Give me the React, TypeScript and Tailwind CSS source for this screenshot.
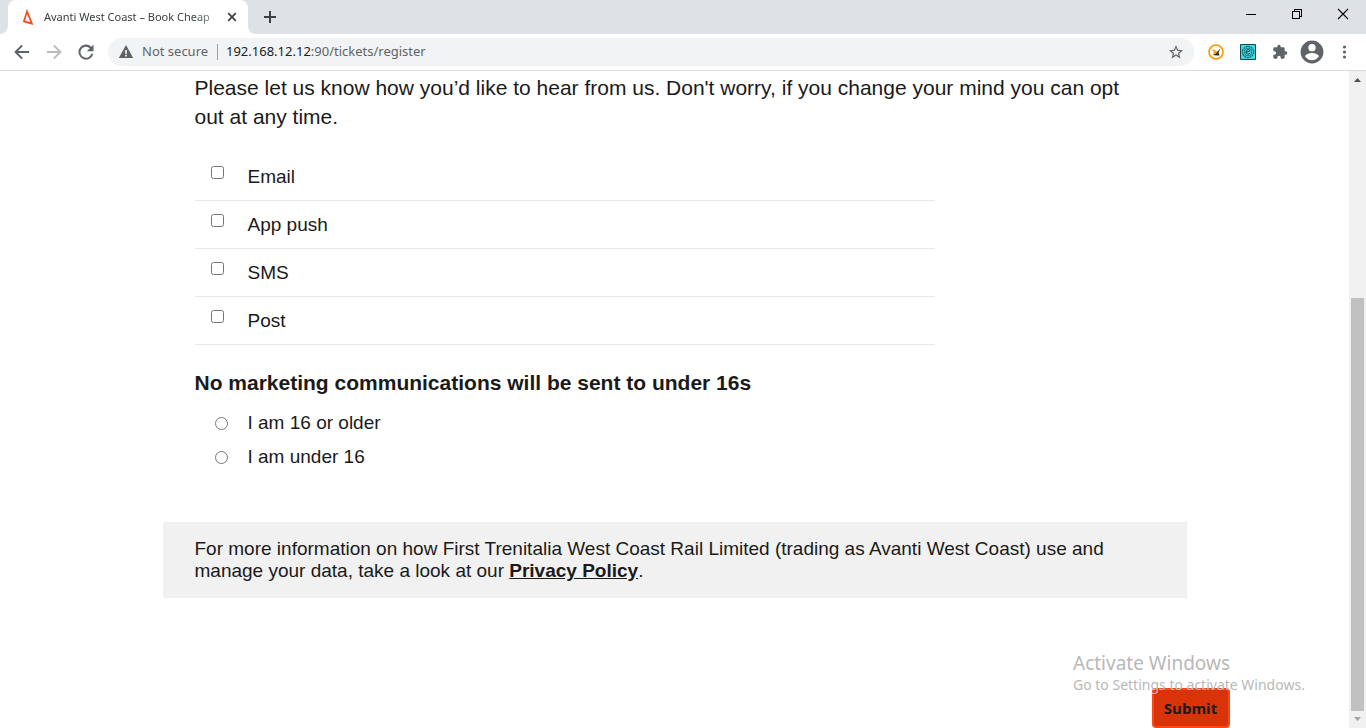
import { useState } from "react";

const contactOptions = [
  { id: "email", label: "Email" },
  { id: "app-push", label: "App push" },
  { id: "sms", label: "SMS" },
  { id: "post", label: "Post" },
];

const ageOptions = [
  { id: "older", label: "I am 16 or older" },
  { id: "under", label: "I am under 16" },
];

function TabStrip() {
  return (
    <div className="flex h-[34px] shrink-0 items-stretch bg-[#dee1e6]">
      <div className="relative ml-2 flex w-60 items-center rounded-t-lg bg-white pr-2 pl-3">
        <svg className="absolute bottom-0 -left-2 size-2" viewBox="0 0 8 8" aria-hidden="true">
          <path d="M8 0v8H0a8 8 0 0 0 8-8z" fill="#fff" />
        </svg>
        <svg className="absolute -right-2 bottom-0 size-2" viewBox="0 0 8 8" aria-hidden="true">
          <path d="M0 0v8h8a8 8 0 0 1-8-8z" fill="#fff" />
        </svg>
        <svg className="size-4 shrink-0" viewBox="0 0 16 16" aria-hidden="true">
          <path d="M7 2.400 3.900 12.300l8 2.300z" fill="none" stroke="#ff4713" strokeWidth="1.700" />
        </svg>
        <span className="ml-2 w-[174px] shrink-0 text-[11px] whitespace-nowrap text-[#3c4043] [mask-image:linear-gradient(to_right,black_150px,transparent_190px)]">
          Avanti West Coast – Book Cheap
        </span>
        <button aria-label="Close tab" className="ml-1.5 flex size-4 shrink-0 items-center justify-center">
          <svg className="size-4" viewBox="0 0 16 16" fill="none" stroke="#3c4043" strokeWidth="1.7" aria-hidden="true">
            <path d="m4.2 4.2 7.6 7.6M11.8 4.2l-7.6 7.6" />
          </svg>
        </button>
      </div>
      <button aria-label="New tab" className="ml-3 flex w-5 items-center justify-center">
        <svg className="size-4" viewBox="0 0 16 16" fill="none" stroke="#3c4043" strokeWidth="2" aria-hidden="true">
          <path d="M8 2v12M2 8h12" />
        </svg>
      </button>
      <div className="ml-auto flex h-7">
        <button aria-label="Minimize" className="flex w-[46px] items-center justify-center">
          <svg className="size-3" viewBox="0 0 12 12" shapeRendering="crispEdges" aria-hidden="true">
            <path d="M1 6h10v1H1z" />
          </svg>
        </button>
        <button aria-label="Restore" className="flex w-[46px] items-center justify-center">
          <svg className="size-3" viewBox="0 0 12 12" fill="none" stroke="#000" shapeRendering="crispEdges" aria-hidden="true">
            <path d="M1.5 3.5h7v7h-7zM3.5 3.5v-2h7v7h-2" />
          </svg>
        </button>
        <button aria-label="Close" className="flex w-[46px] items-center justify-center">
          <svg className="size-3" viewBox="0 0 12 12" fill="none" stroke="#000" strokeWidth="1.1" aria-hidden="true">
            <path d="m1 1 10 10M11 1 1 11" />
          </svg>
        </button>
      </div>
    </div>
  );
}

function Toolbar() {
  return (
    <div className="flex h-[37px] shrink-0 items-center border-b border-[#dadce0] bg-white px-3">
      <button aria-label="Back" className="size-5">
        <svg viewBox="0 0 24 24" className="size-5" fill="#5f6368" aria-hidden="true">
          <path d="M20.5 10.8H7.2l5.9-5.9L11.4 3.2 2.6 12l8.8 8.8 1.7-1.7-5.9-5.9h13.3z" />
        </svg>
      </button>
      <button aria-label="Forward" className="ml-3 size-5">
        <svg viewBox="0 0 24 24" className="size-5" fill="#babcbe" aria-hidden="true">
          <path d="M3.5 10.8h13.3l-5.9-5.9 1.7-1.7 8.8 8.8-8.8 8.8-1.7-1.7 5.9-5.9H3.5z" />
        </svg>
      </button>
      <button aria-label="Reload" className="ml-3 size-5">
        <svg viewBox="0 0 24 24" className="size-5" fill="#5f6368" aria-hidden="true">
          <path d="M18.4 5.7A9 9 0 1 0 20.8 14h-2.5a6.6 6.6 0 1 1-1.7-6.5L13 11h8V3z" />
        </svg>
      </button>
      <div className="ml-3 flex h-7 min-w-0 flex-1 items-center rounded-full bg-[#f1f3f4] px-2.5 text-[13px]">
        <svg viewBox="0 0 16 16" className="size-4 shrink-0" aria-hidden="true">
          <path d="M8 1 15.2 14H.8z" fill="#5f6368" />
          <path d="M7.2 6h1.6v3.8H7.2zM7.2 10.8h1.6v1.6H7.2z" fill="#fff" />
        </svg>
        <span className="ml-2 w-[67px] whitespace-nowrap text-[#5f6368]">Not secure</span>
        <span className="mx-2 h-4 w-px bg-[#9aa0a6]" />
        <span className="flex-1 whitespace-nowrap text-[#5f6368]">
          <span className="text-[#202124]">192.168.12.12</span>:90/tickets/register
        </span>
        <button aria-label="Bookmark this page" className="size-4">
          <svg viewBox="0 0 24 24" className="size-4" fill="#5f6368" aria-hidden="true">
            <path d="m22.5 9.2-7.5-.6L12 1.5 9 8.600l-7.500.6 5.700 5L5.500 21.700 12 17.700l6.500 4-1.700-7.500zM12 15.500l-3.900 2.400 1-4.500-3.400-3 4.600-.4L12 5.800l1.700 4.200 4.600.4-3.400 3 1 4.500z" />
          </svg>
        </button>
      </div>
      <button aria-label="Speed test extension" className="ml-3.5 size-4">
        <svg viewBox="0 0 16 16" className="size-4" fill="none" aria-hidden="true">
          <circle cx="8" cy="8" r="7" fill="#fff" stroke="#f90" strokeWidth="1.700" />
          <path d="m3.500 5.500 3 .3 2.200 1.500 3.500-2.300-4.700 5.700-3 .3 1.500-3z" fill="#f8a21c" />
          <path d="M12.500 4.500 8.300 9.300l-2.800 2 6 .2-1-3z" fill="#222" />
        </svg>
      </button>
      <button aria-label="Testing extension" className="ml-4 size-4">
        <svg viewBox="0 0 16 16" className="size-4" fill="none" aria-hidden="true">
          <path d="M.5.5h15v15H.5z" fill="#3fdbe2" stroke="#17454d" />
          <circle cx="8" cy="8" r="5.600" stroke="#17616b" strokeWidth="1.200" strokeDasharray="2 .6" />
          <circle cx="8" cy="8" r="3.800" stroke="#17616b" strokeWidth=".8" />
          <path d="M6 8.300 10 7c0-2-3.600-2-4 .8-.2 2.400 2.600 2.800 4 1.400" stroke="#17454d" />
        </svg>
      </button>
      <button aria-label="Extensions" className="ml-4 size-4">
        <svg viewBox="0 0 24 24" className="size-4" fill="#5f6368" aria-hidden="true">
          <path d="M20.500 11H19V7a2 2 0 0 0-2-2h-4V3.500a2.500 2.500 0 0 0-5 0V5H4a2 2 0 0 0-2 2v3.800h1.500a2.700 2.700 0 0 1 0 5.400H2V20a2 2 0 0 0 2 2h3.800v-1.500a2.700 2.700 0 0 1 5.400 0V22H17a2 2 0 0 0 2-2v-4h1.500a2.500 2.500 0 0 0 0-5z" />
        </svg>
      </button>
      <button aria-label="Profile" className="ml-3 size-6">
        <svg viewBox="1.500 1.500 21 21" className="size-6" fill="#5f6368" aria-hidden="true">
          <path d="M12 2a10 10 0 1 0 0 20 10 10 0 0 0 0-20zm0 3a3.200 3.200 0 1 1 0 6.400A3.200 3.200 0 0 1 12 5zm0 14.200a7.200 7.200 0 0 1-6-3.200c0-2 4-3.100 6-3.100s6 1.100 6 3.100a7.200 7.200 0 0 1-6 3.200z" />
        </svg>
      </button>
      <button aria-label="Menu" className="ml-3.5 size-4">
        <svg viewBox="0 0 16 16" className="size-4" fill="#5f6368" aria-hidden="true">
          <circle cx="6.500" cy="3" r="1.600" />
          <circle cx="6.500" cy="8" r="1.600" />
          <circle cx="6.500" cy="13" r="1.600" />
        </svg>
      </button>
    </div>
  );
}

function Scrollbar() {
  return (
    <div className="flex w-[17px] shrink-0 flex-col items-center bg-[#f1f1f1]" aria-hidden="true">
      <svg className="h-[17px] w-[17px] shrink-0" viewBox="0 0 17 17">
        <path d="M5 11h7L8.500 7z" fill="#505050" />
      </svg>
      <div className="grow-[210]" />
      <div className="w-[13px] grow-[413] bg-[#c1c1c1]" />
      <svg className="h-[17px] w-[17px] shrink-0" viewBox="0 0 17 17">
        <path d="M5 6h7l-3.500 4z" fill="#a3a3a3" />
      </svg>
    </div>
  );
}

export default function App() {
  const [channels, setChannels] = useState<string[]>([]);
  const [age, setAge] = useState("");

  const toggle = (id: string) =>
    setChannels((current) =>
      current.includes(id) ? current.filter((item) => item !== id) : [...current, id],
    );

  return (
    <div className="relative flex h-screen flex-col overflow-hidden bg-white font-['Noto_Sans',sans-serif]">
      <TabStrip />
      <Toolbar />
      <div className="flex min-h-0 flex-1">
        <main className="min-w-0 flex-1 overflow-hidden font-['Liberation_Sans',Arial,sans-serif] text-[#1a1a1a]">
          <form onSubmit={(event) => event.preventDefault()}>
            <div className="mx-auto max-w-[1024px]">
              <div className="px-8 pt-0.5">
                <p className="max-w-[940px] text-[21px] leading-[29px]">
                  Please let us know how you’d like to hear from us. Don't worry, if you change your mind you can opt
                  out at any time.
                </p>
                <div className="mt-[22px] max-w-[740px]">
                  {contactOptions.map((option) => (
                    <div key={option.id} className="flex h-12 items-start border-b border-[#e8e8e8] pl-4">
                      <input
                        id={option.id}
                        type="checkbox"
                        className="mt-[13px] size-[13px]"
                        checked={channels.includes(option.id)}
                        onChange={() => toggle(option.id)}
                      />
                      <label htmlFor={option.id} className="pt-3 pl-6 text-[19px] leading-6">
                        {option.label}
                      </label>
                    </div>
                  ))}
                </div>
                <fieldset className="mt-[23px]">
                  <legend className="text-[21px] leading-[29px] font-bold">
                    No marketing communications will be sent to under 16s
                  </legend>
                  <div className="flex flex-col pt-[9px]">
                    {ageOptions.map((option) => (
                      <div key={option.id} className="flex h-[34px] items-center pl-5">
                        <input
                          id={option.id}
                          type="radio"
                          name="age"
                          className="size-[13px]"
                          checked={age === option.id}
                          onChange={() => setAge(option.id)}
                        />
                        <label htmlFor={option.id} className="pl-5 text-[19px] leading-6">
                          {option.label}
                        </label>
                      </div>
                    ))}
                  </div>
                </fieldset>
              </div>
              <p className="mt-12 bg-[#f1f1f1] px-8 py-4 text-[19px] leading-[22px]">
                For more information on how First Trenitalia West Coast Rail Limited (trading as Avanti West Coast) use
                and manage your data, take a look at our{" "}
                <a href="#privacy" className="font-bold underline">
                  Privacy Policy
                </a>
                .
              </p>
            </div>
            <div className="mx-auto mt-[90px] flex max-w-[1110px] justify-end">
              <button
                type="submit"
                className="h-10 w-[78px] rounded border-2 border-[#ff4713] bg-[#d93409] font-['Open_Sans',sans-serif] text-[15px] leading-5 font-bold"
              >
                Submit
              </button>
            </div>
          </form>
        </main>
        <Scrollbar />
      </div>
      <div className="pointer-events-none absolute right-[57px] bottom-[33px] w-[236px] whitespace-nowrap text-[#b8b8b8]">
        <p className="text-[19px] leading-6">Activate Windows</p>
        <p className="text-[14px] leading-5">Go to Settings to activate Windows.</p>
      </div>
    </div>
  );
}
